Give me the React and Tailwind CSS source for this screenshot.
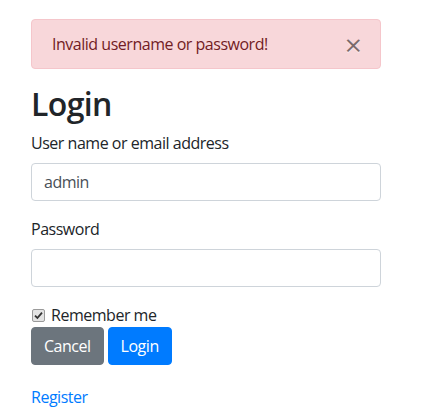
import React from "react";

export default function App() {
  return (
    <div className="min-h-[413px] bg-white font-['Open_Sans',sans-serif] text-base leading-6 tracking-[-0.03em] text-[#212529]">
      <div className="w-[381px] pl-[31px] pt-[19px]">
        <div className="relative mb-4 rounded border border-[#f5c6cb] bg-[#f8d7da] py-3 pl-5 pr-16 text-[#721c24]">
          Invalid username or password!
          <button
            type="button"
            className="absolute right-[18px] top-[13px] flex h-[24px] items-center text-[30px] font-medium leading-none tracking-normal text-black opacity-50 [text-shadow:0_1px_0_#fff]"
          >
            ×
          </button>
        </div>

        <h2 className="mb-2 text-[32px] font-semibold leading-[1.2] tracking-[-0.02em]">Login</h2>

        <div className="mb-4">
          <label className="mb-2 block">User name or email address</label>
          <input
            type="text"
            defaultValue="admin"
            className="block h-[38px] w-full rounded border border-[#ced4da] bg-white px-3 py-1.5 tracking-[-0.03em] text-[#495057] outline-none"
          />
        </div>

        <div className="mb-4">
          <label className="mb-2 block">Password</label>
          <input
            type="password"
            className="block h-[38px] w-full rounded border border-[#ced4da] bg-white px-3 py-1.5 text-[#495057] outline-none"
          />
        </div>

        <div className="flex h-6 items-center">
          <span className="ml-[1px] flex h-[13px] w-[13px] items-center justify-center rounded-[2px] border border-[#9a9a9a] bg-[#e3e3e3]">
            <svg width="9" height="9" viewBox="0 0 9 9">
              <path d="M1 4.6 L3.4 7 L8 1.6" fill="none" stroke="#333" strokeWidth="1.8" />
            </svg>
          </span>
          <span className="ml-[6px]">Remember me</span>
        </div>

        <div className="mb-5 flex gap-1">
          <button
            type="button"
            className="rounded border border-[#6c757d] bg-[#6c757d] px-3 py-1.5 leading-6 tracking-[-0.03em] text-white"
          >
            Cancel
          </button>
          <button
            type="button"
            className="rounded border border-[#007bff] bg-[#007bff] px-3 py-1.5 leading-6 tracking-[-0.03em] text-white"
          >
            Login
          </button>
        </div>

        <a href="#" className="text-[#007bff]">
          Register
        </a>
      </div>
    </div>
  );
}
